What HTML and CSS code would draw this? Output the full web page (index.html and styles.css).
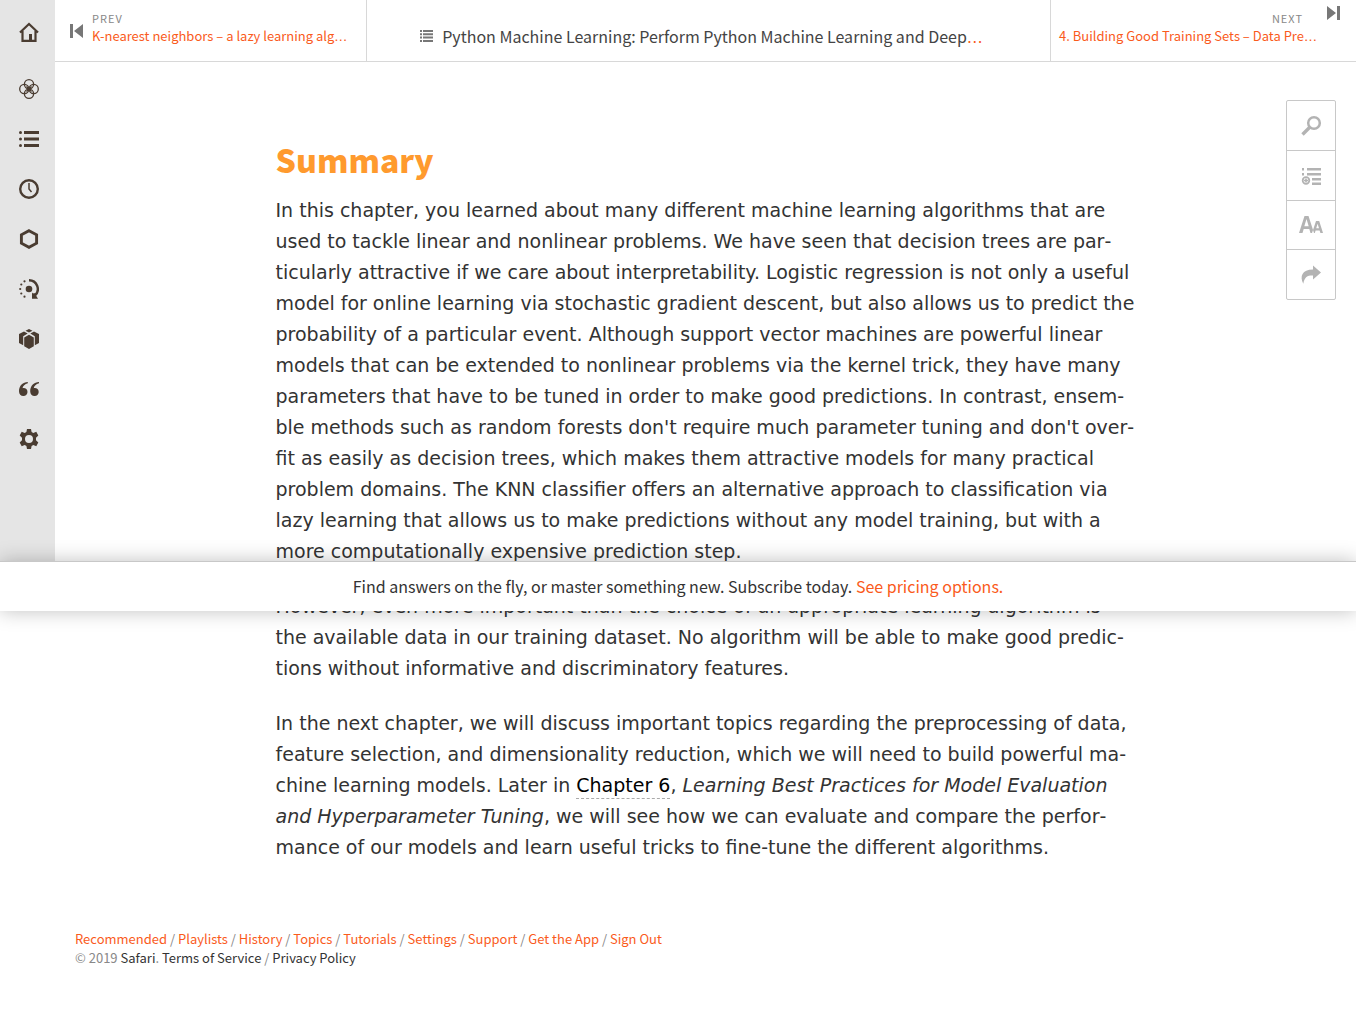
FILE: index.html
```html
<!DOCTYPE html>
<html lang="en">
<head>
<meta charset="utf-8">
<meta name="viewport" content="width=device-width, initial-scale=1">
<title>Summary - Python Machine Learning</title>
<link rel="stylesheet" href="styles.css">
</head>
<body>
<div class="layout">
  <nav class="sidebar" aria-label="Main">
    <a href="#" class="side-link home" aria-label="Home"><svg viewBox="0 0 20 20"><path d="M1 10.500 10 2l9 8.500M3.500 9v9.800h13V9" fill="none" stroke="currentColor" stroke-width="2.200"/><path d="M10 12h3v7h-3z"/></svg></a>
    <a href="#" class="side-link" aria-label="Recommended"><svg viewBox="0 0 20 20"><g fill="none" stroke="currentColor" stroke-width="1.300"><circle cx="10" cy="5.300" r="4.600"/><circle cx="10" cy="14.700" r="4.600"/><circle cx="5.300" cy="10" r="4.600"/><circle cx="14.700" cy="10" r="4.600"/><path d="m7.500 7.500 5 5m0-5-5 5"/></g></svg></a>
    <a href="#" class="side-link" aria-label="Playlists"><svg viewBox="0 0 20 20"><path d="M5 2h15v3H5zM5 8.500h15v3H5zM5 15h15v3H5z"/><circle cx="1.500" cy="3.500" r="1.500"/><circle cx="1.500" cy="10" r="1.500"/><circle cx="1.500" cy="16.500" r="1.500"/></svg></a>
    <a href="#" class="side-link" aria-label="History"><svg viewBox="0 0 20 20"><circle cx="10" cy="10" r="8.800" fill="none" stroke="currentColor" stroke-width="2.400"/><path d="M10 4v6l2.500 3" fill="none" stroke="currentColor" stroke-width="1.500"/></svg></a>
    <a href="#" class="side-link" aria-label="Topics"><svg viewBox="0 0 20 20"><path d="m10 1.700 7.600 4.100v8.400L10 18.300l-7.600-4.100V5.800z" fill="none" stroke="currentColor" stroke-width="2.900"/></svg></a>
    <a href="#" class="side-link" aria-label="Tutorials"><svg viewBox="0 0 20 20"><circle cx="10" cy="10" r="3.300"/><path d="M10 1.200a8.800 8.800 0 0 1 6 15.200" fill="none" stroke="currentColor" stroke-width="2.400"/><path d="m13 13.500 1 1 1.500-.5 3.500 5.800h-6z"/><circle cx="5.500" cy="2.300" r="1.100"/><circle cx="2.300" cy="5.500" r="1.100"/><circle cx="1.200" cy="10" r="1.100"/><circle cx="2.300" cy="14.500" r="1.100"/><circle cx="5.500" cy="17.700" r="1.100"/></svg></a>
    <a href="#" class="side-link" aria-label="Offers"><svg viewBox="0 0 20 20"><path d="m10 0 3.500 1.700L10 3.500 6.500 1.700zM5 2.500l3.700 2L4.200 7.200v9.100L0 14V5zM15 2.500l-3.700 2 4.500 2.700v9.100L20 14V5zM10 5.800l4.800 2.800v8.600L10 20l-4.800-2.800V8.600z"/></svg></a>
    <a href="#" class="side-link" aria-label="Highlights"><svg viewBox="0 0 20 20"><path d="M8.800 3C4 3 0 6.500 0 12.300 0 15.200 1.800 17 4.300 17a4 4 0 0 0 4.200-4c0-2.400-1.700-4-4-4-.5 0-.8.100-1 .2C4 7 5.800 5 8.800 4.300zM20 3c-4.800 0-8.800 3.500-8.800 9.300 0 2.900 1.800 4.700 4.300 4.700a4 4 0 0 0 4.200-4c0-2.400-1.700-4-4-4-.5 0-.8.100-1 .2.500-2.200 2.300-4.200 5.300-4.900z"/></svg></a>
    <a href="#" class="side-link" aria-label="Settings"><svg viewBox="0 0 20 20"><path fill-rule="evenodd" d="M8 0h4l.6 3 1.700 1 3-1.200 2 3.600L17 8.800v2.400l2.300 2.400-2 3.600-3-1.200-1.700 1-.6 3H8l-.6-3-1.700-1-3 1.200-2-3.600L3 11.200V8.800L.7 6.400l2-3.600 3 1.200 1.700-1zM10 6a4 4 0 1 0 0 8 4 4 0 0 0 0-8z"/></svg></a>
  </nav>

  <div class="page">
    <header class="topbar">
      <a href="#" class="prev">
        <svg class="skip" viewBox="0 0 14 14"><path d="M0 0h3v14H0zM13 0v14L4 7z"/></svg>
        <span class="nav-text"><span class="nav-label">Prev</span><span class="nav-title">K-nearest neighbors – a lazy learning alg<span class="dots">…</span></span></span>
      </a>
      <a href="#" class="book">
        <svg class="toc" viewBox="0 0 13 12"><path d="M3 0h10v2H3zM3 3.300h10v2H3zM3 6.600h10v2H3zM3 10h10v2H3zM0 0h2v2H0zM0 3.300h2v2H0zM0 6.600h2v2H0zM0 10h2v2H0z"/></svg>
        <span>Python Machine Learning: Perform Python Machine Learning and Deep<span class="dots accent">…</span></span>
      </a>
      <a href="#" class="next">
        <span class="nav-text"><span class="nav-label">Next</span><span class="nav-title">4. Building Good Training Sets – Data Pre<span class="dots">…</span></span></span>
        <svg class="skip" viewBox="0 0 14 14"><path d="M11 0h3v14h-3zM1 0v14l9-7z"/></svg>
      </a>
    </header>

    <main class="article">
      <h1>Summary</h1>
      <p>In this chapter, you learned about many different machine learning algorithms that are used to tackle linear and nonlinear problems. We have seen that decision trees are par&shy;ticularly attractive if we care about interpretability. Logistic regression is not only a useful model for online learning via stochastic gradient descent, but also allows us to predict the probability of a particular event. Although support vector machines are powerful linear models that can be extended to nonlinear problems via the kernel trick, they have many parameters that have to be tuned in order to make good predictions. In contrast, ensem&shy;ble methods such as random forests don't require much parameter tuning and don't over&shy;fit as easily as decision trees, which makes them attractive models for many practical problem domains. The KNN classifier offers an alternative approach to classification via lazy learning that allows us to make predictions without any model training, but with a more computationally expensive prediction step.</p>
      <p>However, even more important than the choice of an appropriate learning algorithm is the available data in our training dataset. No algorithm will be able to make good predic&shy;tions without informative and discriminatory features.</p>
      <p>In the next chapter, we will discuss important topics regarding the preprocessing of data, feature selection, and dimensionality reduction, which we will need to build powerful ma&shy;chine learning models. Later in <a href="#" class="chapter">Chapter 6</a>, <em>Learning Best Practices for Model Evaluation and Hyperparameter Tuning</em>, we will see how we can evaluate and compare the perfor&shy;mance of our models and learn useful tricks to fine-tune the different algorithms.</p>
    </main>

    <footer class="footer">
      <div class="footer-links"><a href="#">Recommended</a> / <a href="#">Playlists</a> / <a href="#">History</a> / <a href="#">Topics</a> / <a href="#">Tutorials</a> / <a href="#">Settings</a> / <a href="#">Support</a> / <a href="#">Get the App</a> / <a href="#">Sign Out</a></div>
      <div class="footer-legal">© 2019 <a href="#">Safari</a>. <a href="#">Terms of Service</a> / <a href="#">Privacy Policy</a></div>
    </footer>
  </div>
</div>

<div class="tools">
  <button type="button" aria-label="Search"><svg viewBox="0 0 24 24"><circle cx="15" cy="9" r="5.800" fill="none" stroke="currentColor" stroke-width="2.500"/><path d="m11 13-7.500 7.500" fill="none" stroke="currentColor" stroke-width="3.400"/></svg></button>
  <button type="button" aria-label="Add to playlist"><svg viewBox="0 0 24 24"><path d="M8 4h14v2.500H8zM8 9h14v2.500H8zM13 14h9v2.500h-9zM13 18.500h9V21h-9zM3 4h2v2.500H3zM3 9h2v2.500H3z"/><circle cx="7" cy="16.500" r="3.300" fill="none" stroke="currentColor" stroke-width="1.800"/><path d="M6.200 14.500h1.600v4H6.200zM5 15.700h4v1.600H5z"/></svg></button>
  <button type="button" aria-label="Text size"><svg viewBox="0 0 24 24"><path fill-rule="evenodd" d="M0 20 5.500 3h4L15 20h-3.500l-1.200-4H4.700l-1.200 4zM5.300 13.200h4.400L7.500 6zM13 20l4-12h3.200L24 20h-2.600l-.8-2.600h-4l-.8 2.600zM17.200 15.300h2.800l-1.400-4.600z"/></svg></button>
  <button type="button" aria-label="Share"><svg viewBox="0 0 24 24"><path d="M14 2.500 22 9.500l-8 7v-4c-5-.2-8.500 1-9.700 8.300C.500 13.500 3 6.500 14 6.500z"/></svg></button>
</div>

<aside class="banner">Find answers on the fly, or master something new. Subscribe today. <a href="#">See pricing options.</a></aside>
</body>
</html>
```

FILE: styles.css
```css
* { box-sizing: border-box; }

body {
  margin: 0;
  background: #fff;
  color: #333;
  font: 13px/19px "Noto Sans CJK SC", sans-serif;
}

a { color: #fa5b1c; text-decoration: none; }
svg { fill: currentColor; display: block; flex: none; }

.layout { display: flex; align-items: flex-start; }

.sidebar {
  flex: none;
  display: flex;
  flex-direction: column;
  width: 55px;
  min-height: 59vh;
  background: #e5e5e5;
}
.side-link {
  display: flex;
  align-items: center;
  height: 50px;
  padding-left: 19px;
  color: #4a3c31;
}
.side-link.home { height: 64px; }
.side-link svg { width: 20px; height: 20px; }

.page { flex: 1; min-width: 0; }

.topbar {
  display: grid;
  grid-template-columns: 311fr 685fr 305fr;
  min-height: 62px;
  border-bottom: 1px solid #d8d8d8;
}
.prev, .next { display: flex; padding-top: 10px; }
.prev { gap: 8px; padding-left: 15px; }
.prev .skip { margin-top: 14px; }
.next { justify-content: space-between; padding-left: 8px; padding-right: 16px; }
.next .skip { margin-top: -4px; }
.skip { width: 14px; height: 14px; color: #777; }
.nav-text { display: flex; flex-direction: column; white-space: nowrap; }
.nav-label {
  font-size: 11px;
  line-height: 17px;
  letter-spacing: 1px;
  text-transform: uppercase;
  color: #888;
}
.nav-title { line-height: 18px; }
.next .nav-label { text-align: right; padding-right: 14px; }
.dots { font-family: "DejaVu Sans", sans-serif; line-height: 1; }
.book {
  display: flex;
  align-items: center;
  justify-content: center;
  gap: 9px;
  padding: 11px 14px 0 0;
  border-left: 1px solid #d8d8d8;
  border-right: 1px solid #d8d8d8;
  color: #444;
  font-size: 16px;
  line-height: 24px;
  white-space: nowrap;
}
.toc { width: 13px; height: 12px; color: #777; }
.accent { color: #fa5b1c; }

.article {
  max-width: 900px;
  margin: 0 auto;
  padding: 74px 20px 0;
  font: 19px/31px "DejaVu Sans", sans-serif;
}
.article h1 {
  margin: 0 0 13px;
  color: #ff9a2e;
  font: 900 32px/46px "Noto Sans CJK SC", sans-serif;
}
.article p { margin: 0 0 24px; }
.chapter { padding-bottom: 2px; color: #000; border-bottom: 1px dashed #aaa; }

.footer { margin-top: 66px; padding: 0 20px 68px; color: #888; }
.footer-legal a { color: #333; }

.tools {
  position: absolute;
  top: 100px;
  right: 20px;
  display: flex;
  flex-direction: column;
  width: 50px;
  border: 1px solid #c8c8c8;
  border-radius: 2px;
  background: #fff;
}
.tools button {
  display: flex;
  align-items: center;
  justify-content: center;
  height: 50px;
  padding: 0;
  border: 0;
  border-bottom: 1px solid #c8c8c8;
  background: none;
  color: #b3b3b3;
}
.tools button:nth-child(n+3) { height: 49px; }
.tools button:last-child { border-bottom: 0; }
.tools svg { width: 24px; height: 24px; }

.banner {
  position: absolute;
  top: 561px;
  left: 0;
  right: 0;
  padding: 13px 0;
  border-top: 1px solid #c8c8c8;
  background: #fff;
  box-shadow: 0 0 20px rgba(0, 0, 0, 0.25);
  text-align: center;
  font-size: 16px;
  line-height: 23px;
}
```
